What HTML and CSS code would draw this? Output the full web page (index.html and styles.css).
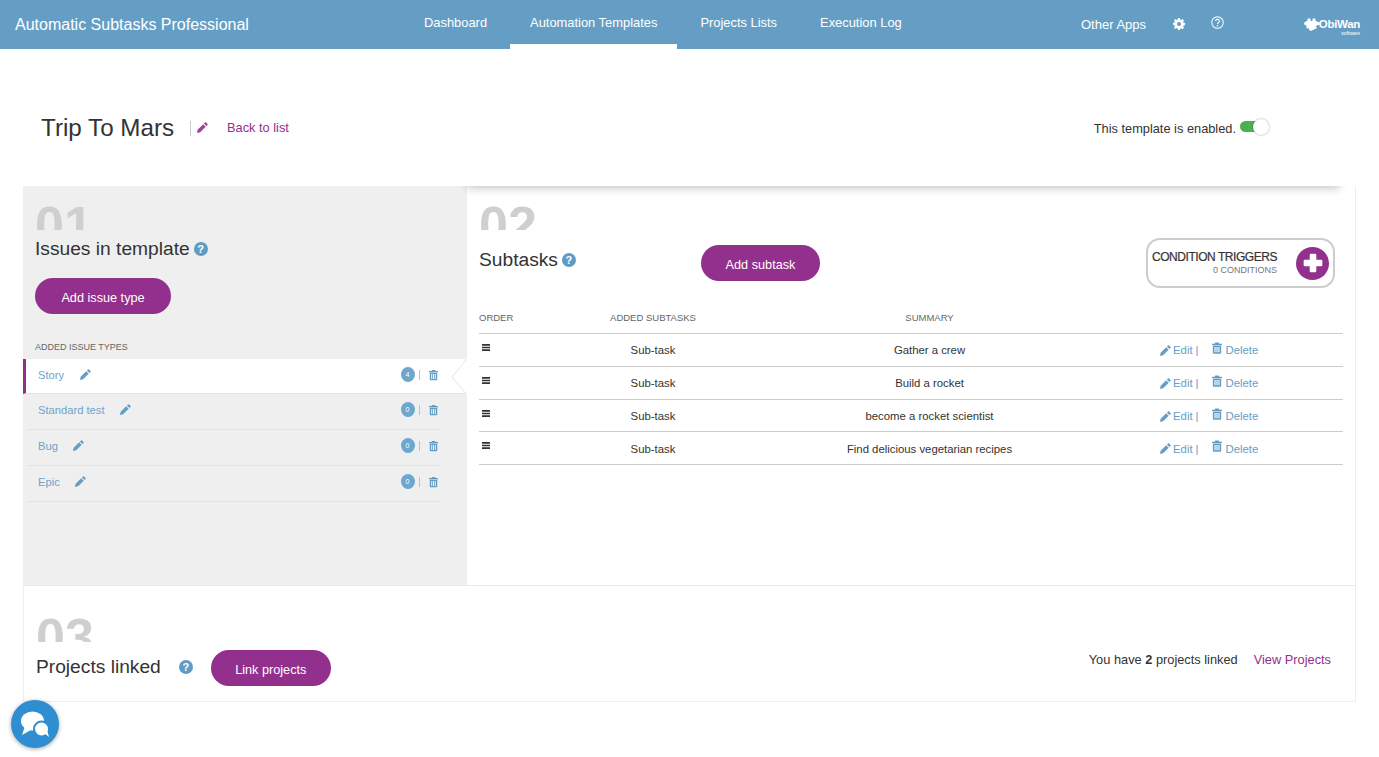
FILE: index.html
```html
<!DOCTYPE html>
<html lang="en">
<head>
<meta charset="utf-8">
<title>Automatic Subtasks Professional</title>
<link rel="stylesheet" href="styles.css">
</head>
<body>
<svg class="defs" width="0" height="0" aria-hidden="true">
  <symbol id="pencil" viewBox="0 0 14 14"><path d="M10.200.6a1 1 0 0 1 1.400 0l1.800 1.800a1 1 0 0 1 0 1.400l-1.400 1.400-3.200-3.200zM7.900 2.900l3.200 3.200-7.100 7.100-4 .8.800-4z"/></symbol>
  <symbol id="trash" viewBox="0 0 12 14"><path fill-rule="evenodd" d="M4 .3h4l.8 1.500H12v1.500H0V1.800h3.200zM1 4h10v9a1 1 0 0 1-1 1H2a1 1 0 0 1-1-1zM3 5.800v6.400h1.300V5.800zm2.350 0v6.400h1.300V5.800zm2.350 0v6.400H9V5.800z"/></symbol>
  <symbol id="bars" viewBox="0 0 8 7"><path d="M0 0h8v1.700H0zM0 2.650h8v1.700H0zM0 5.300h8V7H0z"/></symbol>
</svg>

<header class="nav">
  <div class="brand">Automatic Subtasks Professional</div>
  <nav class="tabs">
    <a class="tab">Dashboard</a>
    <a class="tab active">Automation Templates</a>
    <a class="tab">Projects Lists</a>
    <a class="tab">Execution Log</a>
  </nav>
  <div class="nav-right">
    <span class="other">Other Apps</span>
    <svg class="gear" viewBox="0 0 24 24"><path fill="#fff" fill-rule="evenodd" d="M10 0h4l.6 3.200 2 .8L19.300 2.200l2.800 2.800-1.800 2.700.8 2 3.200.6v4l-3.200.6-.8 2 1.800 2.700-2.800 2.800-2.700-1.800-2 .8L14 24h-4l-.6-3.200-2-.8-2.700 1.800-2.800-2.800 1.800-2.700-.8-2L0 13.600v-4l2.900-.6.8-2L1.900 5l2.800-2.800L7.400 4l2-.8zM12 8a4 4 0 1 0 0 8 4 4 0 0 0 0-8z"/></svg>
    <svg class="qmark" viewBox="0 0 14 14"><circle cx="7" cy="7" r="6.200" fill="none" stroke="#fff" stroke-width="1.100"/><path d="M5 5.400a2 2 0 1 1 3.100 1.700c-.8.500-1.100.8-1.100 1.600" fill="none" stroke="#fff" stroke-width="1.200"/><circle cx="7" cy="10.500" r=".8" fill="#fff"/></svg>
    <div class="logo">
      <svg class="puzzle" viewBox="0 0 16 13"><g fill="#fff"><rect x="2" y="3" width="11" height="5"/><rect x="5" y="7" width="5" height="5"/><circle cx="1.800" cy="5.500" r="1.700"/><circle cx="5" cy="2" r="1.700"/><circle cx="10" cy="2" r="1.700"/><circle cx="14" cy="5.500" r="1.700"/><circle cx="3.800" cy="9" r="1.500"/><circle cx="11" cy="9.500" r="1.600"/><circle cx="7" cy="11.500" r="1.400"/></g></svg>
      <div class="logo-text"><span class="logo-name">ObiWan</span><span class="logo-sub">software</span></div>
    </div>
  </div>
</header>

<section class="page-head">
  <div class="head-left">
    <h1 class="page-title">Trip To Mars</h1>
    <span class="edit-title"><svg class="ico-title"><use href="#pencil"/></svg></span>
    <a class="back">Back to list</a>
  </div>
  <div class="enabled">
    <span>This template is enabled.</span>
    <span class="toggle"><span class="knob"></span></span>
  </div>
</section>

<main class="board">
  <div class="board-top">
    <aside class="issues">
      <div class="num">01</div>
      <h2 class="sec-title issues-title">Issues in template <span class="help">?</span></h2>
      <button class="pill pill-issue">Add issue type</button>
      <div class="list-label">ADDED ISSUE TYPES</div>
      <ul class="types">
        <li class="type current"><span class="type-name">Story</span><svg class="ico-edit gap-story"><use href="#pencil"/></svg><span class="type-right"><span class="count">4</span><span class="sep"></span><svg class="ico-trash"><use href="#trash"/></svg></span></li>
        <li class="type"><span class="type-name">Standard test</span><svg class="ico-edit gap-std"><use href="#pencil"/></svg><span class="type-right"><span class="count">0</span><span class="sep"></span><svg class="ico-trash"><use href="#trash"/></svg></span></li>
        <li class="type"><span class="type-name">Bug</span><svg class="ico-edit gap-bug"><use href="#pencil"/></svg><span class="type-right"><span class="count">0</span><span class="sep"></span><svg class="ico-trash"><use href="#trash"/></svg></span></li>
        <li class="type"><span class="type-name">Epic</span><svg class="ico-edit gap-epic"><use href="#pencil"/></svg><span class="type-right"><span class="count">0</span><span class="sep"></span><svg class="ico-trash"><use href="#trash"/></svg></span></li>
      </ul>
      <svg class="notch" viewBox="0 0 16 36"><path d="M16 0 1 18l15 18" fill="#fff" stroke="#eee" stroke-width="1.200"/></svg>
    </aside>

    <section class="subtasks">
      <div class="top-shadow"></div>
      <div class="sub-head">
        <div class="sub-title-col">
          <div class="num">02</div>
          <h2 class="sec-title sub-title">Subtasks <span class="help">?</span></h2>
        </div>
        <button class="pill pill-sub">Add subtask</button>
        <div class="triggers">
          <div class="trig-text">
            <div class="trig-title">CONDITION TRIGGERS</div>
            <div class="trig-sub">0 CONDITIONS</div>
          </div>
          <span class="trig-plus"><svg viewBox="0 0 20 20" class="plus"><path fill="#fff" d="M8 1.500h4a1 1 0 0 1 1 1V7h4.500a1 1 0 0 1 1 1v4a1 1 0 0 1-1 1H13v4.500a1 1 0 0 1-1 1H8a1 1 0 0 1-1-1V13H2.500a1 1 0 0 1-1-1V8a1 1 0 0 1 1-1H7V2.500a1 1 0 0 1 1-1z"/></svg></span>
        </div>
      </div>
      <div class="table">
        <div class="row head-row">
          <span class="c-order">ORDER</span><span class="c-mid">ADDED SUBTASKS</span><span class="c-mid">SUMMARY</span><span></span>
        </div>
        <div class="row body-row">
          <span class="c-order"><svg class="ico-bars"><use href="#bars"/></svg></span><span class="c-mid">Sub-task</span><span class="c-mid">Gather a crew</span>
          <span class="acts"><svg class="ico-act-edit"><use href="#pencil"/></svg>Edit<i class="bar">|</i><svg class="ico-act-trash"><use href="#trash"/></svg>Delete</span>
        </div>
        <div class="row body-row">
          <span class="c-order"><svg class="ico-bars"><use href="#bars"/></svg></span><span class="c-mid">Sub-task</span><span class="c-mid">Build a rocket</span>
          <span class="acts"><svg class="ico-act-edit"><use href="#pencil"/></svg>Edit<i class="bar">|</i><svg class="ico-act-trash"><use href="#trash"/></svg>Delete</span>
        </div>
        <div class="row body-row">
          <span class="c-order"><svg class="ico-bars"><use href="#bars"/></svg></span><span class="c-mid">Sub-task</span><span class="c-mid">become a rocket scientist</span>
          <span class="acts"><svg class="ico-act-edit"><use href="#pencil"/></svg>Edit<i class="bar">|</i><svg class="ico-act-trash"><use href="#trash"/></svg>Delete</span>
        </div>
        <div class="row body-row">
          <span class="c-order"><svg class="ico-bars"><use href="#bars"/></svg></span><span class="c-mid">Sub-task</span><span class="c-mid">Find delicious vegetarian recipes</span>
          <span class="acts"><svg class="ico-act-edit"><use href="#pencil"/></svg>Edit<i class="bar">|</i><svg class="ico-act-trash"><use href="#trash"/></svg>Delete</span>
        </div>
      </div>
    </section>
  </div>

  <section class="projects">
    <div class="proj-left">
      <div class="num">03</div>
      <div class="proj-title-row">
        <h2 class="sec-title">Projects linked</h2>
        <span class="help proj-help">?</span>
        <button class="pill pill-link">Link projects</button>
      </div>
    </div>
    <div class="proj-right">
      <span>You have <b>2</b> projects linked</span>
      <a class="back">View Projects</a>
    </div>
  </section>
</main>

<button class="chat" aria-label="Chat">
  <svg viewBox="0 0 48 48" class="chat-ico">
    <ellipse cx="21.500" cy="21" rx="11.500" ry="9.500" fill="#fff"/>
    <path fill="#fff" d="M14 26l-3 9 9-5z"/>
    <circle cx="30.500" cy="29" r="8.500" fill="#2f8dd1"/>
    <circle cx="30.500" cy="29" r="6.500" fill="#fff"/>
    <path fill="#fff" d="M33 33l5 4-2-7z"/>
  </svg>
</button>
</body>
</html>
```

FILE: styles.css
```css
* { box-sizing: border-box; }
html, body { margin: 0; padding: 0; height: 100%; overflow: hidden; }
body { font-family: "Liberation Sans", Arial, sans-serif; color: #333; background: #fff; font-size: 12.800px; }
.defs { display: block; height: 0; }
a { cursor: pointer; }
svg { display: block; }

.nav { height: 49px; background: #659ec5; display: flex; color: #fff; }
.brand { width: 404px; padding: 16px 0 0 15px; font-size: 16px; line-height: 18px; }
.tabs { display: flex; gap: 3px; }
.tab { height: 49px; padding: 15px 20px 0; font-size: 12.900px; line-height: 15px; border-bottom: 5px solid transparent; }
.tab.active { border-bottom-color: #fff; }
.nav-right { margin-left: auto; display: flex; width: 298px; align-items: flex-start; position: relative; }
.other { margin-top: 17px; font-size: 13px; line-height: 15px; }
.gear { width: 12px; height: 12px; margin: 18px 0 0 27px; }
.qmark { width: 13px; height: 13px; margin: 16px 0 0 26px; }
.logo { display: flex; margin: 18px 0 0 80px; }
.puzzle { width: 16px; height: 13px; flex: none; }
.logo-text { display: flex; flex-direction: column; align-items: flex-end; margin-top: 1px; width: 40px; }
.logo-name { font-size: 11.500px; line-height: 11px; font-weight: 700; letter-spacing: -.3px; }
.logo-sub { font-size: 5px; line-height: 5px; margin-top: 1px; }

.page-head { height: 137px; padding: 0 110px 0 41px; display: flex; justify-content: space-between; align-items: flex-start; }
.head-left { display: flex; align-items: center; margin-top: 64px; height: 30px; }
.page-title { margin: 0; font-size: 24.200px; line-height: 30px; font-weight: 400; width: 149px; }
.edit-title { border-left: 1px solid #ccc; height: 15px; width: 37px; padding: 1px 0 0 6px; }
.ico-title { width: 11px; height: 11px; fill: #a13f9d; }
.back { color: #932f8c; font-size: 12.800px; line-height: 15px; }
.head-left .back { margin-top: -2px; }
.enabled { display: flex; margin-top: 72px; line-height: 15px; gap: 4px; }
.toggle { position: relative; width: 29px; height: 11px; }
.toggle::before { content: ""; display: block; width: 20px; height: 11px; border-radius: 6px; background: #4caf50; }
.knob { position: absolute; left: 13px; top: -2px; width: 16px; height: 16px; border-radius: 50%; background: #fff; box-shadow: 0 0 2px rgba(0,0,0,.4); }

.board { margin: 0 23px; width: 1333px; height: 516px; border-right: 1px solid #eee; border-bottom: 1px solid #eee; border-left: 1px solid #eee; display: flex; flex-direction: column; }
.board-top { height: 400px; display: flex; border-bottom: 1px solid #e8e8e8; }

.num { height: 44px; padding-top: 13px; overflow: hidden; font-size: 52px; line-height: 52px; font-weight: 700; color: #cfcfcf; }
.sec-title { margin: 0; font-size: 19.200px; line-height: 24px; font-weight: 400; color: #333; display: flex; align-items: center; gap: 4px; }
.help { display: inline-block; width: 14px; height: 14px; border-radius: 50%; background: #5f9cc5; color: #fff; font-size: 11px; line-height: 14px; font-weight: 700; text-align: center; }

.pill { display: block; border: 0; border-radius: 18px; height: 36px; background: #932f8c; color: #fff; font: 12.700px "Liberation Sans", Arial, sans-serif; padding: 3px 0 0; }

.issues { position: relative; width: 444px; margin-left: -1px; background: #efefef; padding: 0 0 0 12px; flex: none; }
.issues-title { margin-top: 7px; }
.pill-issue { width: 136px; margin-top: 17px; }
.list-label { margin-top: 27px; font-size: 9px; line-height: 12px; color: #666; }
.types { list-style: none; margin: 6px 0 0 -12px; padding: 0; }
.type { height: 36px; margin-left: 4px; width: 413px; display: flex; align-items: center; padding: 0 0 4px 11px; border-bottom: 1px solid #e4e4e4; color: #6ea3c9; font-size: 11.200px; }
.type.current { margin-left: 0; width: 444px; height: 35px; background: #fff; border-left: 3px solid #932f8c; padding: 0 29px 3px 12px; }
.ico-edit { width: 11px; height: 11px; fill: #659ec5; }
.gap-story { margin-left: 16px; }
.gap-std { margin-left: 15px; }
.gap-bug { margin-left: 15px; }
.gap-epic { margin-left: 15px; }
.type-right { margin-left: auto; display: flex; align-items: center; }
.count { width: 14px; height: 15px; border-radius: 50%; background: #6ea7cd; color: #fff; font-size: 7px; line-height: 15px; text-align: center; }
.sep { width: 1.500px; height: 10px; margin: 0 9px 0 4px; background: #a9c8dd; }
.ico-trash { width: 9px; height: 12px; fill: #659ec5; }
.type:not(.current) .ico-trash { margin-right: 2px; }
.notch { position: absolute; left: 428px; top: 173px; width: 16px; height: 36px; }

.subtasks { position: relative; flex: 1; padding: 0 12px; min-width: 0; }
.top-shadow { position: absolute; left: 0; right: 15px; top: -12px; height: 12px; background: #fff; box-shadow: 0 2px 8px rgba(0,0,0,.24); clip-path: inset(12px -20px -14px -20px); }
.sub-head { display: flex; height: 131px; align-items: flex-start; }
.sub-title-col { width: 222px; }
.sub-title { margin-top: 18px; }
.pill-sub { width: 119px; margin-top: 59px; }
.triggers { margin: 52px 0 0 326px; width: 189px; height: 50px; border: 2px solid #ccc; border-radius: 14px; display: flex; align-items: center; padding: 0 4px 0 4px; }
.trig-text { width: 125px; text-align: right; }
.trig-title { font-size: 12px; line-height: 14px; letter-spacing: -.45px; color: #333; white-space: nowrap; -webkit-text-stroke: .2px #333; }
.trig-sub { margin-top: 1px; font-size: 9px; line-height: 11px; color: #777; }
.trig-plus { margin-left: auto; width: 33px; height: 33px; border-radius: 50%; background: #932f8c; display: flex; align-items: center; justify-content: center; }
.plus { width: 22px; height: 22px; }

.table { width: 864px; margin-top: -15px; }
.row { display: grid; grid-template-columns: 108px 132px 421px 203px; border-bottom: 1px solid #ccc; }
.head-row { height: 32px; font-size: 9.500px; line-height: 32px; color: #666; }
.body-row { height: 33px; font-size: 11.350px; color: #333; line-height: 33px; }
.body-row:nth-child(4) { height: 32px; }
.body-row:nth-child(5) { line-height: 35px; }
.c-order { display: block; }
.c-mid { text-align: center; }
.ico-bars { width: 8px; height: 7px; margin: 10px 0 0 3px; fill: #333; }
.acts { display: flex; padding-left: 20px; color: #659ec5; align-items: flex-start; }
.ico-act-edit { width: 11px; height: 11px; margin: 11px 2px 0 0; fill: #659ec5; flex: none; }
.bar { font-style: normal; margin: 0 13px 0 3px; color: #659ec5; }
.ico-act-trash { width: 10px; height: 12px; margin: 8px 4px 0 0; fill: #659ec5; flex: none; }

.projects { flex: 1; display: flex; justify-content: space-between; padding: 0 24px 0 12px; }
.proj-left { flex: 1; }
.projects .num { height: 56px; padding-top: 25px; }
.proj-title-row { display: flex; align-items: center; margin-top: 6px; }
.proj-help { margin-left: 18px; }
.pill-link { width: 120px; margin-left: 18px; margin-top: 2px; }
.proj-right { display: flex; gap: 16px; margin-top: 66px; line-height: 15px; }

.chat { position: fixed; left: 11px; top: 700px; width: 48px; height: 48px; border: 0; padding: 0; border-radius: 50%; background: #2f8dd1; box-shadow: 0 1px 4px rgba(0,0,0,.35); }
.chat-ico { width: 48px; height: 48px; }
```
